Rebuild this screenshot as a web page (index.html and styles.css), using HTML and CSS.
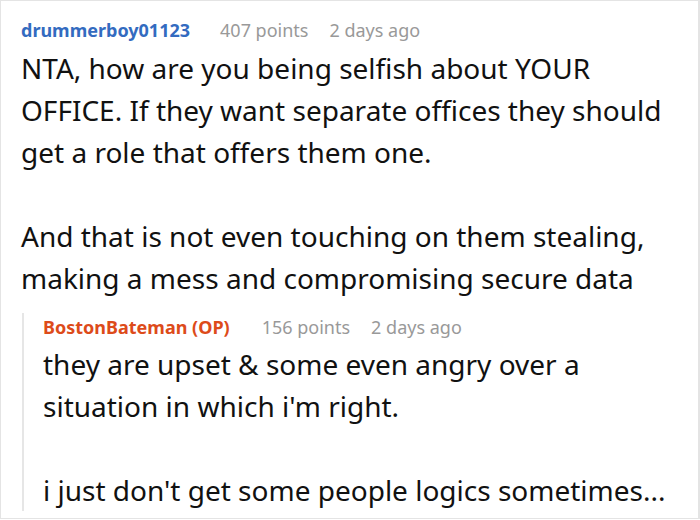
FILE: index.html
```html
<!DOCTYPE html>
<html>
<head>
<meta charset="utf-8">
<link rel="stylesheet" href="styles.css">
</head>
<body>
<div class="frame">
  <div class="comment">
    <div class="meta">
      <span class="user">drummerboy01123</span>
      <span class="info">407 points</span>
      <span class="info">2 days ago</span>
    </div>
    <div class="body">
      <p>NTA, how are you being selfish about YOUR OFFICE. If they want separate offices they should get a role that offers them one.</p>
      <p>And that is not even touching on them stealing, making a mess and compromising secure data</p>
    </div>
    <div class="reply">
      <div class="meta">
        <span class="user op">BostonBateman (OP)</span>
        <span class="info">156 points</span>
        <span class="info">2 days ago</span>
      </div>
      <div class="body">
        <p>they are upset &amp; some even angry over a situation in which i'm right.</p>
        <p>i just don't get some people logics sometimes...</p>
      </div>
    </div>
  </div>
</div>
</body>
</html>
```
FILE: styles.css
```css
html, body {
  margin: 0;
  padding: 0;
  background: #fff;
}
.frame {
  width: 700px;
  height: 519px;
  box-sizing: border-box;
  border: 1px solid #e4e4e4;
  border-right-width: 2px;
  overflow: hidden;
  font-family: "Noto Sans", sans-serif;
}
.comment {
  padding: 15px 20px 0 20px;
}
.meta {
  display: flex;
  font-size: 18px;
  line-height: 28px;
}
.user {
  font-weight: bold;
  color: #336bc0;
  margin-right: 30px;
}
.user.op {
  color: #dd4b1a;
  margin-right: 32px;
}
.info {
  color: #999;
}
.info + .info {
  margin-left: 21px;
}
.body {
  font-size: 28px;
  line-height: 42px;
  color: #111;
  margin-top: 3px;
}
.body p {
  margin: 0 0 42px 0;
}
.body p:last-child {
  margin-bottom: 0;
}
.reply {
  margin-top: 26px;
  margin-left: 1px;
  border-left: 2px solid #e6e6e6;
  padding-left: 19px;
}
.reply .meta {
  margin-top: -12px;
}
.reply .body {
  margin-top: 2px;
}
.reply .body p:last-child {
  margin-bottom: -9px;
}
```
